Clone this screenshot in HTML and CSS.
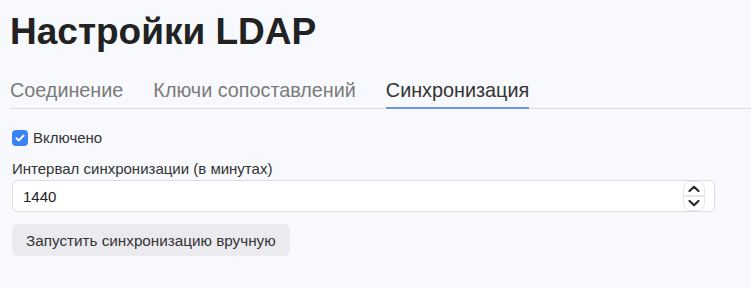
FILE: index.html
```html
<!DOCTYPE html>
<html lang="ru">
<head>
<meta charset="utf-8">
<link rel="stylesheet" href="styles.css">
</head>
<body>
<div class="page">
  <h1 class="title">Настройки LDAP</h1>
  <nav class="tabs">
    <span class="tab">Соединение</span>
    <span class="tab">Ключи сопоставлений</span>
    <span class="tab active">Синхронизация</span>
  </nav>
  <div class="panel">
    <label class="check">
      <span class="box"><svg viewBox="0 0 16 16" width="16" height="16"><path d="M4.5 8.2l2.3 2.2 4.7-4.8" fill="none" stroke="#fff" stroke-width="2" stroke-linecap="round" stroke-linejoin="round"/></svg></span>
      <span>Включено</span>
    </label>
    <div class="field">
      <div class="label">Интервал синхронизации (в минутах)</div>
      <div class="input">
        <span class="value">1440</span>
        <span class="spin">
          <svg viewBox="0 0 22 30" width="22" height="30">
            <rect x="0.5" y="0.5" width="21" height="29" rx="7" fill="#fff" stroke="#e6e6e9"/>
            <line x1="1" y1="15" x2="21" y2="15" stroke="#dcdce0" stroke-width="1.5"/>
            <path d="M6.5 10l4.5-4.2 4.5 4.2" fill="none" stroke="#2b2b2b" stroke-width="2.2" stroke-linecap="round" stroke-linejoin="round"/>
            <path d="M6.5 20l4.5 4.2 4.5-4.2" fill="none" stroke="#2b2b2b" stroke-width="2.2" stroke-linecap="round" stroke-linejoin="round"/>
          </svg>
        </span>
      </div>
    </div>
    <button class="btn">Запустить синхронизацию вручную</button>
  </div>
</div>
</body>
</html>
```
FILE: styles.css
```css
html, body {
  margin: 0;
  padding: 0;
  background: #f8f9fc;
  font-family: "Liberation Sans", Arial, sans-serif;
  color: #333;
}
.page {
  padding: 0 0 0 10px;
}
.title {
  margin: 0;
  padding-top: 10px;
  font-size: 37px;
  line-height: 44px;
  font-weight: 700;
  color: #222;
}
.tabs {
  margin-top: 24px;
  display: flex;
  gap: 30px;
  border-bottom: 1px solid #dcdde0;
}
.tab {
  font-size: 19.8px;
  line-height: 24px;
  color: #7a7a7a;
  padding-bottom: 5px;
  border-bottom: 2px solid transparent;
  margin-bottom: -1px;
}
.tab.active {
  color: #333;
  border-bottom-color: #6f95e6;
}
.panel {
  padding: 21px 36px 0 2px;
}
.check {
  display: flex;
  align-items: center;
  gap: 5px;
  font-size: 15px;
  line-height: 16px;
}
.box {
  width: 16px;
  height: 16px;
  border-radius: 4px;
  background: #3b82f6;
  display: inline-flex;
}
.field {
  margin-top: 14px;
}
.label {
  font-size: 15px;
  line-height: 18px;
}
.input {
  margin-top: 2px;
  height: 30px;
  border: 1px solid #dcdcdf;
  border-radius: 5px;
  background: #fff;
  display: flex;
  align-items: center;
  justify-content: space-between;
  padding: 0 9px 0 10px;
}
.value {
  font-size: 15px;
  color: #222;
}
.spin {
  display: flex;
}
.btn {
  margin-top: 12px;
  height: 32px;
  border: none;
  border-radius: 6px;
  background: #ebebef;
  font-family: inherit;
  font-size: 15.25px;
  color: #333;
  padding: 0 14px;
}
```
